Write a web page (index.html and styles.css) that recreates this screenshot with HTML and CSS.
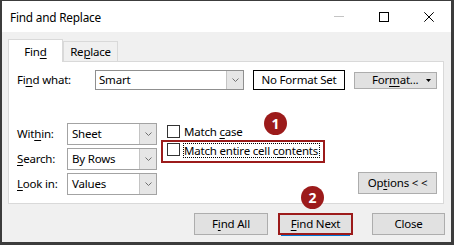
FILE: index.html
```html
<!DOCTYPE html>
<html>
<head>
<meta charset="utf-8">
<link rel="stylesheet" href="styles.css">
</head>
<body>
<div class="window">
  <div class="titlebar">
    <span class="title">Find and Replace</span>
    <span class="spacer"></span>
    <span class="ctl"><svg width="10" height="10" viewBox="0 0 10 10"><line x1="0" y1="4.5" x2="10" y2="4.5" stroke="#c4c4c4" stroke-width="1"/></svg></span>
    <span class="ctl"><svg width="10" height="10" viewBox="0 0 10 10"><rect x="0.5" y="0.5" width="9" height="9" fill="none" stroke="#000" stroke-width="1"/></svg></span>
    <span class="ctl"><svg width="10" height="10" viewBox="0 0 10 10"><path d="M0.3 0.3 L9.7 9.7 M9.7 0.3 L0.3 9.7" stroke="#000" stroke-width="1"/></svg></span>
  </div>
  <div class="client">
    <div class="tabs">
      <div class="tab active">Fin<u>d</u></div>
      <div class="tab">Re<u>p</u>lace</div>
    </div>
    <div class="panel">
      <div class="row-find">
        <span class="lbl lbl-find">Fi<u>n</u>d what:</span>
        <div class="combo combo-edit">
          <span class="val">Smart</span>
          <span class="drop"><svg width="7" height="4" viewBox="0 0 7 4"><polyline points="0.5,0.5 3.5,3.5 6.5,0.5" fill="none" stroke="#707070" stroke-width="1"/></svg></span>
        </div>
        <div class="nfs">No Format Set</div>
        <div class="btn btn-format"><span class="fmt-text">For<u>m</u>at...</span><svg class="tri" width="5" height="3" viewBox="0 0 5 3"><polygon points="0,0 5,0 2.5,3" fill="#000"/></svg></div>
      </div>
      <div class="row-opts">
        <div class="selects">
          <span class="lbl">Wit<u>h</u>in:</span>
          <div class="combo"><span class="val">Sheet</span><span class="drop"><svg width="7" height="4" viewBox="0 0 7 4"><polyline points="0.5,0.5 3.5,3.5 6.5,0.5" fill="none" stroke="#707070" stroke-width="1"/></svg></span></div>
          <span class="lbl"><u>S</u>earch:</span>
          <div class="combo"><span class="val">By Rows</span><span class="drop"><svg width="7" height="4" viewBox="0 0 7 4"><polyline points="0.5,0.5 3.5,3.5 6.5,0.5" fill="none" stroke="#707070" stroke-width="1"/></svg></span></div>
          <span class="lbl"><u>L</u>ook in:</span>
          <div class="combo"><span class="val">Values</span><span class="drop"><svg width="7" height="4" viewBox="0 0 7 4"><polyline points="0.5,0.5 3.5,3.5 6.5,0.5" fill="none" stroke="#707070" stroke-width="1"/></svg></span></div>
        </div>
        <div class="checks">
          <div class="check check-case"><span class="box"></span><span class="ctext">Match <u>c</u>ase</span></div>
          <div class="check check-entire"><span class="box"></span><span class="focus">Match entire cell c<u>o</u>ntents</span></div>
        </div>
        <div class="btn btn-options">Op<u>t</u>ions &lt; &lt;</div>
      </div>
    </div>
    <div class="actions">
      <div class="btn btn-findall">F<u>i</u>nd All</div>
      <div class="btn btn-findnext"><u>F</u>ind Next</div>
      <div class="btn btn-close">Close</div>
    </div>
  </div>
  <span class="badge badge-1">1</span>
  <span class="badge badge-2">2</span>
</div>
</body>
</html>
```
FILE: styles.css
```css
* { box-sizing: border-box; }
html, body { margin: 0; padding: 0; background: #ffffff; }
body {
  font-family: "Noto Sans", "Open Sans", sans-serif;
  font-size: 11.5px;
  letter-spacing: -0.2px;
  color: #000;
}
u { text-decoration: underline; text-decoration-thickness: 1px; text-underline-offset: 1.5px; }

.window {
  position: relative;
  width: 454px;
  height: 245px;
  border-style: solid;
  border-color: #3c3c3c;
  border-width: 1px 3px 3px 2px;
  background: #f0f0f0;
  display: flex;
  flex-direction: column;
}

.titlebar {
  height: 31px;
  background: #fff;
  display: flex;
  align-items: center;
  padding-left: 8px;
  flex: none;
}
.title { font-size: 11.8px; line-height: 16px; }
.spacer { flex: 1; }
.ctl {
  width: 45px;
  height: 31px;
  display: flex;
  align-items: center;
  justify-content: center;
}
.ctl svg { display: block; }

.client {
  flex: 1;
  display: flex;
  flex-direction: column;
  padding: 7px 6px 0 6px;
}

.tabs {
  display: flex;
  align-items: flex-end;
  height: 22px;
  flex: none;
}
.tab {
  width: 55px;
  height: 20px;
  border: 1px solid #d9d9d9;
  border-bottom: none;
  background: #f0f0f0;
  display: flex;
  justify-content: center;
  padding-top: 2px;
  line-height: 16px;
}
.tab.active {
  position: relative;
  z-index: 1;
  height: 23px;
  margin-bottom: -1px;
  background: #fff;
  padding-top: 4px;
}

.panel {
  width: 436px;
  height: 143px;
  background: #fff;
  border: 1px solid #d9d9d9;
  padding: 8px 6px 0 8px;
  flex: none;
}

.row-find {
  display: flex;
  align-items: center;
  height: 20px;
}
.lbl { line-height: 16px; display: flex; align-items: center; }
.lbl-find { width: 78px; }

.combo {
  display: flex;
  align-items: stretch;
  height: 22px;
  background: #fff;
  border: 1px solid #a3a3a3;
}
.combo .val {
  flex: 1;
  display: flex;
  align-items: center;
  padding-left: 4px;
  line-height: 16px;
}
.combo .drop {
  width: 17px;
  background: #e6e6e6;
  border-left: 1px solid #c4c4c4;
  display: flex;
  align-items: center;
  justify-content: center;
}
.combo .drop svg { display: block; }
.combo-edit { width: 149px; height: 20px; border-color: #8f8f8f; }
.combo-edit .val { padding-left: 3px; }

.nfs {
  margin-left: 9px;
  width: 92px;
  height: 20px;
  border: 1px solid #000;
  display: flex;
  align-items: center;
  justify-content: center;
  line-height: 16px;
}

.btn {
  background: #e1e1e1;
  border: 1px solid #adadad;
  display: flex;
  align-items: center;
  justify-content: center;
  line-height: 16px;
  height: 22px;
}
.btn-format {
  margin-left: 9px;
  width: 83px;
  height: 17px;
  justify-content: flex-start;
  padding-left: 17px;
}
.fmt-text { flex: 1; }
.tri { display: block; margin-right: 5px; }

.row-opts {
  display: flex;
  align-items: flex-start;
  margin-top: 33px;
}
.selects {
  display: grid;
  grid-template-columns: 50px 90px;
  grid-auto-rows: 22px;
  row-gap: 3px;
}
.checks {
  margin-left: 4px;
  display: flex;
  flex-direction: column;
}
.check { display: flex; }
.box {
  width: 13px;
  height: 13px;
  border: 1px solid #333;
  background: #fff;
  flex: none;
}
.check-case {
  height: 17px;
  align-items: center;
  padding-left: 6px;
}
.check-case .ctext { margin-left: 4px; line-height: 16px; }
.check-entire {
  width: 164px;
  height: 23px;
  border: 2px solid #9c1b1b;
  padding: 1px 0 0 4px;
  align-items: flex-start;
}
.focus {
  margin-left: 3px;
  height: 15px;
  border: 1px dotted #000;
  line-height: 13px;
  padding: 0 1px 0 0;
}
.btn-options {
  margin-left: auto;
  align-self: flex-end;
  margin-bottom: 1px;
  width: 79px;
}

.actions {
  display: flex;
  justify-content: flex-end;
  margin-top: 9px;
}
.btn-findall { width: 74px; margin-right: 10px; }
.btn-findnext {
  position: relative;
  width: 75px;
  margin-right: 19px;
  border: 2px solid #9c1b1b;
}
.btn-findnext::after {
  content: "";
  position: absolute;
  left: 1px;
  right: 1px;
  bottom: -3px;
  height: 1px;
  background: #0078d7;
}
.btn-close { width: 73px; }

.badge {
  position: absolute;
  width: 23px;
  height: 23px;
  border-radius: 50%;
  background: #9c1b1b;
  color: #fff;
  font-weight: 700;
  font-size: 14px;
  letter-spacing: 0;
  line-height: 23px;
  text-align: center;
  z-index: 5;
}
.badge-1 { left: 262px; top: 111px; }
.badge-2 { left: 299px; top: 185px; }
```
